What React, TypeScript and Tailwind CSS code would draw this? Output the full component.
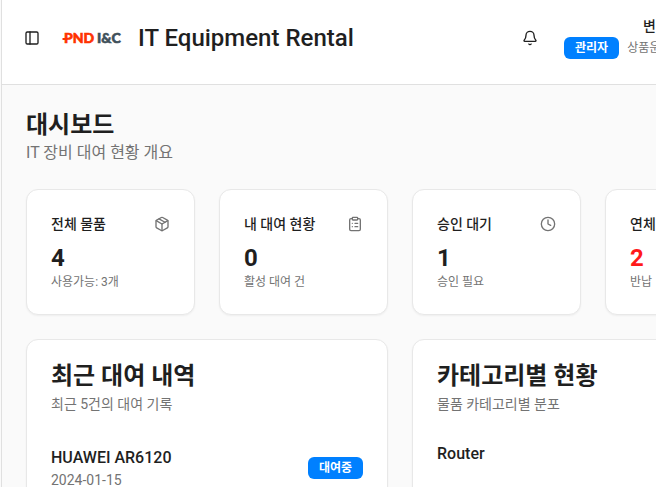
import type { ReactNode } from "react";
import { Bell, ClipboardList, Clock, Package, PanelLeft, TriangleAlert } from "lucide-react";

type Stat = {
  title: string;
  value: number;
  note: string;
  icon: ReactNode;
  alert?: boolean;
};

const stats: Stat[] = [
  { title: "전체 물품", value: 4, note: "사용가능: 3개", icon: <Package size={16} /> },
  { title: "내 대여 현황", value: 0, note: "활성 대여 건", icon: <ClipboardList size={16} /> },
  { title: "승인 대기", value: 1, note: "승인 필요", icon: <Clock size={16} /> },
  { title: "연체", value: 2, note: "반납", icon: <TriangleAlert size={16} />, alert: true },
];

function Logo() {
  return (
    <svg width="60" height="16" viewBox="0 0 60 16" role="img" aria-label="PND I&C" className="shrink-0 font-[Lato,sans-serif] text-[14px] font-black">
      <text x="2" y="13" fill="#ff3200" stroke="#ff3200" strokeWidth="0.6">PND</text>
      <rect x="0.5" y="8" width="5" height="2" fill="#ff3200" />
      <text x="35" y="13" fill="#3f505a" stroke="#3f505a" strokeWidth="0.6">I&amp;C</text>
    </svg>
  );
}

function Badge({ children }: { children: ReactNode }) {
  return (
    <span className="inline-flex shrink-0 items-center rounded-md border border-transparent bg-[#0080ff] px-2.5 py-0.5 text-xs font-bold text-white">
      {children}
    </span>
  );
}

function Card({ children }: { children: ReactNode }) {
  return <section className="rounded-xl border border-[#e8e8e8] bg-white p-6 shadow-xs">{children}</section>;
}

function StatCard({ stat }: { stat: Stat }) {
  return (
    <Card>
      <div className="flex items-center justify-between pb-2">
        <h2 className="text-sm font-medium">{stat.title}</h2>
        <span className="text-[#737373]">{stat.icon}</span>
      </div>
      <p className={stat.alert ? "text-2xl font-bold text-[#ff1a1a]" : "text-2xl font-bold"}>{stat.value}</p>
      <p className="text-xs text-[#737373]">{stat.note}</p>
    </Card>
  );
}

function PanelHeading({ title, note }: { title: string; note: string }) {
  return (
    <div className="flex flex-col gap-1.5 pb-6">
      <h2 className="text-2xl leading-none font-bold">{title}</h2>
      <p className="text-sm text-[#737373]">{note}</p>
    </div>
  );
}

function Header() {
  return (
    <header className="flex items-center gap-4 border-b border-[#e0e0e0] bg-white px-4 pt-4 pb-6">
      <button type="button" aria-label="사이드바" className="flex size-7 items-center justify-center">
        <PanelLeft size={16} />
      </button>
      <Logo />
      <p className="text-2xl font-medium">IT Equipment Rental</p>
      <button type="button" aria-label="알림" className="ml-auto flex size-9 items-center justify-center">
        <Bell size={16} />
      </button>
      <div className="w-[218px]">
        <p className="pl-[79px] text-sm font-medium">변</p>
        <div className="flex items-center gap-2 py-px">
          <Badge>관리자</Badge>
          <span className="text-xs text-[#737373]">상품운</span>
        </div>
      </div>
    </header>
  );
}

export default function App() {
  return (
    <div className="h-screen overflow-hidden bg-[#fafafa] pl-px font-[Roboto,'Noto_Sans_CJK_KR',sans-serif] text-[#1f1f1f]">
      <div className="min-h-screen min-w-[797px] border-l border-[#e0e0e0]">
        <Header />
        <main className="flex flex-col gap-6 p-6">
          <div>
            <h1 className="text-2xl font-bold">대시보드</h1>
            <p className="text-base text-[#737373]">IT 장비 대여 현황 개요</p>
          </div>
          <div className="grid grid-cols-4 gap-6">
            {stats.map((stat) => (
              <StatCard key={stat.title} stat={stat} />
            ))}
          </div>
          <div className="grid grid-cols-2 gap-6">
            <Card>
              <PanelHeading title="최근 대여 내역" note="최근 5건의 대여 기록" />
              <div className="flex items-center justify-between py-2">
                <div>
                  <p className="font-medium">HUAWEI AR6120</p>
                  <p className="text-sm text-[#737373]">2024-01-15</p>
                </div>
                <Badge>대여중</Badge>
              </div>
            </Card>
            <Card>
              <PanelHeading title="카테고리별 현황" note="물품 카테고리별 분포" />
              <p className="py-1 font-medium">Router</p>
            </Card>
          </div>
        </main>
      </div>
    </div>
  );
}
